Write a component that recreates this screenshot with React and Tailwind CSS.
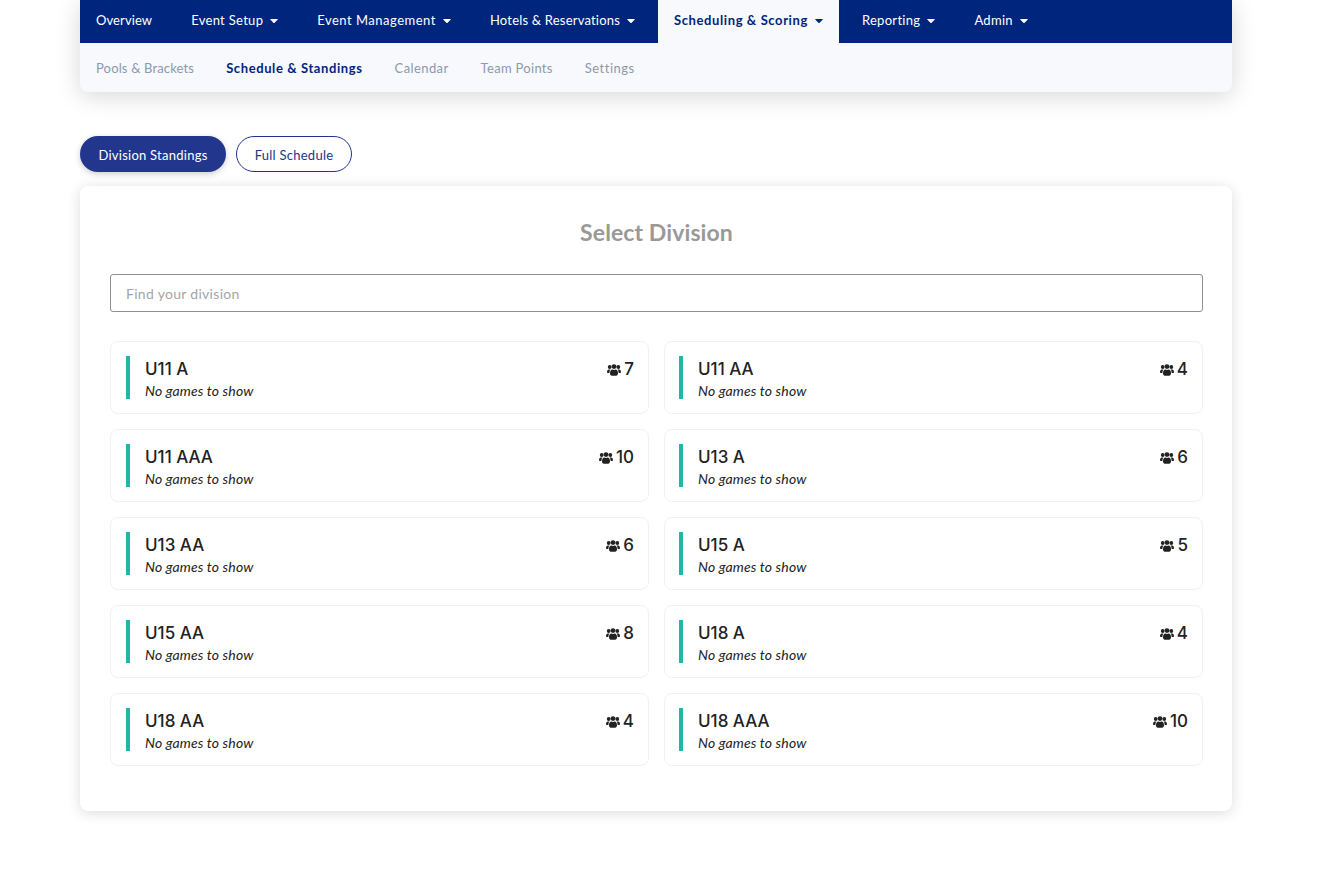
import { FaCaretDown } from 'react-icons/fa';

const topNav = [
  { label: 'Overview', tracking: 'tracking-[0.1px]' },
  { label: 'Event Setup', caret: true, tracking: 'tracking-[0.3px]' },
  { label: 'Event Management', caret: true, tracking: 'tracking-[0.5px]' },
  { label: 'Hotels & Reservations', caret: true, tracking: 'tracking-[0.2px]' },
  { label: 'Scheduling & Scoring', caret: true, active: true, tracking: 'tracking-[0.6px]' },
  { label: 'Reporting', caret: true, tracking: 'tracking-[0.3px]' },
  { label: 'Admin', caret: true, tracking: 'tracking-[0.3px]' },
];

const subNav = [
  { label: 'Pools & Brackets', className: 'tracking-[0.15px]' },
  { label: 'Schedule & Standings', className: 'font-bold tracking-[0.6px] text-[#00257d]' },
  { label: 'Calendar', className: 'tracking-[0.4px]' },
  { label: 'Team Points', className: 'tracking-[0.3px]' },
  { label: 'Settings', className: 'tracking-[0.5px]' },
];

const divisions = [
  ['U11 A', 7], ['U11 AA', 4],
  ['U11 AAA', 10], ['U13 A', 6],
  ['U13 AA', 6], ['U15 A', 5],
  ['U15 AA', 8], ['U18 A', 4],
  ['U18 AA', 4], ['U18 AAA', 10],
];

function TeamsIcon() {
  return (
    <svg viewBox="0 0 14 12" className="h-[12px] w-[14px] fill-current">
      <circle cx="2.7" cy="3" r="1.9" />
      <circle cx="11.3" cy="3" r="1.9" />
      <circle cx="7" cy="2.6" r="2.4" />
      <path d="M0 8.2C0 6.2.8 5.4 1.8 5.4h1.6c-.6.8-1 1.8-1 3v.6H.8C.3 9 0 8.7 0 8.2z" />
      <path d="M14 8.2c0-2-.8-2.8-1.8-2.8h-1.6c.6.8 1 1.8 1 3v.6h1.6c.5 0 .8-.3.8-.8z" />
      <path d="M3 9.2c0-2.4 1.100-3.600 2.400-3.600.5.300 1 .5 1.600.5s1.100-.2 1.600-.5c1.300 0 2.400 1.200 2.400 3.600 0 1.500-.8 2.500-1.800 2.500H4.800c-1 0-1.800-1-1.800-2.500z" />
    </svg>
  );
}

function DivisionCard({ name, teams }) {
  return (
    <div className="flex h-[73px] items-start justify-between rounded-lg border border-[#f1f1f1] bg-white py-[14px] pr-[14px] pl-[15px] even:pl-[14px]">
      <div className="flex h-[43px]">
        <div className="w-1 bg-[#1fb8a6]" />
        <div className="pl-[15px]">
          <div className="font-['Inter',sans-serif] text-[17px] leading-[26px] font-medium text-[#222]">{name}</div>
          <div className="text-[14px] leading-[17px] tracking-[0.15px] italic text-[#222]">No games to show</div>
        </div>
      </div>
      <div className="flex h-[28px] items-center gap-[3px] font-['Inter',sans-serif] text-[17px] font-medium text-[#222]">
        <TeamsIcon />
        <span>{teams}</span>
      </div>
    </div>
  );
}

export default function App() {
  return (
    <div className="min-h-[880px] bg-white font-['Lato',sans-serif]">
      <div className="ml-20 w-[1152px]">
        <div className="rounded-b-lg bg-[#f8f9fd] shadow-[0_4px_24px_rgba(0,0,0,0.16)]">
          <nav className="flex h-[43px] gap-[7px] bg-[#00257d]">
            {topNav.map((item) => (
              <div
                key={item.label}
                className={`flex items-center px-4 pb-[2px] text-[13px] ${item.tracking} ${item.active ? 'bg-[#f8f9fd] font-bold text-[#00257d]' : 'text-white'}`}
              >
                {item.label}
                {item.caret && <FaCaretDown className="ml-[7px] h-[13px] w-[8px]" />}
              </div>
            ))}
          </nav>
          <div className="flex h-[49px] items-center gap-8 px-4 pt-[2px] text-[13px] text-[#8c99ab]">
            {subNav.map((item) => (
              <span key={item.label} className={item.className}>{item.label}</span>
            ))}
          </div>
        </div>

        <div className="mt-11 flex gap-[10px] text-[13px] tracking-[0.25px]">
          <button className="h-9 w-[146px] rounded-full bg-[#21368c] pt-[3px] text-white shadow-[0_2px_6px_rgba(0,0,0,0.2)]">Division Standings</button>
          <button className="h-9 w-[116px] rounded-full border border-[#21368c] bg-white pt-[3px] text-[#21368c]">Full Schedule</button>
        </div>

        <div className="mt-[14px] h-[625px] rounded-lg bg-white pt-[30px] pr-[29px] pl-[30px] shadow-[0_2px_14px_rgba(0,0,0,0.14)]">
          <h2 className="text-center text-[23px] leading-[32px] font-bold tracking-[0.1px] text-[#999]">Select Division</h2>
          <input
            placeholder="Find your division"
            className="mt-[26px] h-[38px] w-full rounded-[3px] border border-[#8f8f8f] px-[15px] text-[14px] tracking-[0.3px] placeholder:text-[#a5a5a5]"
          />
          <div className="mt-[29px] grid grid-cols-2 gap-[15px]">
            {divisions.map(([name, teams]) => (
              <DivisionCard key={name} name={name} teams={teams} />
            ))}
          </div>
        </div>
      </div>
    </div>
  );
}
